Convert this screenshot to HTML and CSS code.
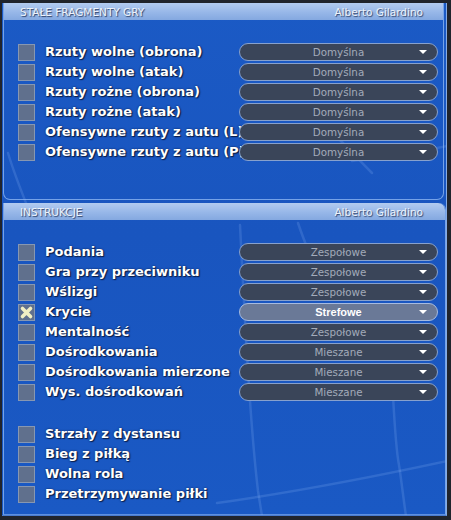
FILE: index.html
```html
<!DOCTYPE html>
<html lang="pl">
<head>
<meta charset="utf-8">
<title>Stałe fragmenty gry</title>
<link rel="stylesheet" href="styles.css">
</head>
<body>
<div class="frame">
  <div class="screen">
    <svg class="net" width="445" height="513" viewBox="0 0 445 513" aria-hidden="true">
      <g fill="none" stroke="#9cc4ff" stroke-opacity="0.18" stroke-width="2.5" stroke-linecap="round">
        <path d="M238 222 C 243 320, 248 420, 256 488 L 260 513"/>
        <path d="M215 500 C 300 488, 380 472, 445 458"/>
        <path d="M391 392 C 393 430, 395 452, 397 462 C 400 482, 402 500, 404 513"/>
        <path d="M333 132 C 348 147, 358 158, 370 170"/>
        <path d="M350 158 C 380 154, 420 148, 445 143"/>
        <path d="M6 150 C 12 170, 18 185, 26 205"/>
        <path d="M296 220 C 300 232, 304 242, 308 252"/>
      </g>
    </svg>

    <section class="panel panel-top">
      <div class="bar"><span>STAŁE FRAGMENTY GRY</span><span>Alberto Gilardino</span></div>
      <div class="body">
        <div class="group">
          <div class="row"><span class="cb"></span><span class="label">Rzuty wolne (obrona)</span><div class="dd"><span>Domyślna</span><i class="arrow"></i></div></div>
          <div class="row"><span class="cb"></span><span class="label">Rzuty wolne (atak)</span><div class="dd"><span>Domyślna</span><i class="arrow"></i></div></div>
          <div class="row"><span class="cb"></span><span class="label">Rzuty rożne (obrona)</span><div class="dd"><span>Domyślna</span><i class="arrow"></i></div></div>
          <div class="row"><span class="cb"></span><span class="label">Rzuty rożne (atak)</span><div class="dd"><span>Domyślna</span><i class="arrow"></i></div></div>
          <div class="row"><span class="cb"></span><span class="label">Ofensywne rzuty z autu (L)</span><div class="dd"><span>Domyślna</span><i class="arrow"></i></div></div>
          <div class="row"><span class="cb"></span><span class="label">Ofensywne rzuty z autu (P)</span><div class="dd"><span>Domyślna</span><i class="arrow"></i></div></div>
        </div>
      </div>
    </section>

    <section class="panel panel-bottom">
      <div class="bar"><span>INSTRUKCJE</span><span>Alberto Gilardino</span></div>
      <div class="body">
        <div class="group">
          <div class="row"><span class="cb"></span><span class="label">Podania</span><div class="dd"><span>Zespołowe</span><i class="arrow"></i></div></div>
          <div class="row"><span class="cb"></span><span class="label">Gra przy przeciwniku</span><div class="dd"><span>Zespołowe</span><i class="arrow"></i></div></div>
          <div class="row"><span class="cb"></span><span class="label">Wślizgi</span><div class="dd"><span>Zespołowe</span><i class="arrow"></i></div></div>
          <div class="row"><span class="cb checked"><svg width="15" height="15" viewBox="0 0 15 15"><path d="M3.5 3.5 L11.5 11.5 M11.5 3.5 L3.5 11.5" stroke="#f1efc4" stroke-width="3.6" stroke-linecap="round"/></svg></span><span class="label">Krycie</span><div class="dd active"><span>Strefowe</span><i class="arrow"></i></div></div>
          <div class="row"><span class="cb"></span><span class="label">Mentalność</span><div class="dd"><span>Zespołowe</span><i class="arrow"></i></div></div>
          <div class="row"><span class="cb"></span><span class="label">Dośrodkowania</span><div class="dd"><span>Mieszane</span><i class="arrow"></i></div></div>
          <div class="row"><span class="cb"></span><span class="label">Dośrodkowania mierzone</span><div class="dd"><span>Mieszane</span><i class="arrow"></i></div></div>
          <div class="row"><span class="cb"></span><span class="label">Wys. dośrodkowań</span><div class="dd"><span>Mieszane</span><i class="arrow"></i></div></div>
        </div>
        <div class="group">
          <div class="row"><span class="cb"></span><span class="label">Strzały z dystansu</span></div>
          <div class="row"><span class="cb"></span><span class="label">Bieg z piłką</span></div>
          <div class="row"><span class="cb"></span><span class="label">Wolna rola</span></div>
          <div class="row"><span class="cb"></span><span class="label">Przetrzymywanie piłki</span></div>
        </div>
      </div>
    </section>
  </div>
</div>
</body>
</html>
```

FILE: styles.css
```css
html, body {
  margin: 0;
  padding: 0;
  background: #1d2129;
}

.frame {
  width: 451px;
  height: 520px;
  box-sizing: border-box;
  padding: 3px 4px 4px 2px;
  background: #20242c;
}

.screen {
  position: relative;
  height: 100%;
  box-sizing: border-box;
  display: flex;
  flex-direction: column;
  gap: 3px;
  overflow: hidden;
  background: linear-gradient(180deg, #1b5ac5 0%, #1955bf 45%, #1a59c4 100%);
  border-right: 1px solid #86ace6;
  border-bottom: 1px solid #4a7cd0;
}

.net {
  position: absolute;
  left: 0;
  top: 0;
  pointer-events: none;
}

.panel {
  position: relative;
  margin-left: 1px;
  box-sizing: border-box;
  border: 1px solid rgba(140, 182, 242, 0.8);
  border-top: 0;
}

.panel-top {
  width: 441px;
  height: 197px;
  flex: none;
  border-radius: 0 0 7px 7px;
}

.panel-bottom {
  width: 443px;
  flex: 1;
  border-radius: 0 7px 0 0;
  border-bottom-color: rgba(140, 182, 242, 0.6);
}

.bar {
  height: 17px;
  display: flex;
  justify-content: space-between;
  align-items: center;
  padding: 0 20px 0 16px;
  background: linear-gradient(180deg, #b2cbf0 0%, #97b7e8 55%, #84a8e0 100%);
  font-family: "DejaVu Sans", Verdana, sans-serif;
  font-size: 10.5px;
  color: #eef3fa;
  text-shadow: 1px 1px 1px #2d4168;
  white-space: nowrap;
}

.panel-bottom .bar {
  padding-right: 22px;
  border-radius: 0 7px 0 0;
}

.body {
  padding: 22px 0 0 14px;
  display: flex;
  flex-direction: column;
  gap: 22px;
}

.group {
  display: flex;
  flex-direction: column;
}

.row {
  display: flex;
  align-items: center;
  height: 20px;
}

.cb {
  flex: none;
  width: 17px;
  height: 17px;
  box-sizing: border-box;
  background: #60708d;
  border: 1px solid #8797b1;
  display: flex;
  align-items: center;
  justify-content: center;
}

.label {
  flex: none;
  width: 194px;
  margin-left: 10px;
  white-space: nowrap;
  font-family: "DejaVu Sans", Verdana, sans-serif;
  font-weight: bold;
  font-size: 13px;
  line-height: 16px;
  color: #ffffff;
  text-shadow: 1px 1px 1px #0c1d46, 0 0 2px #0c1d46;
}

.dd {
  position: relative;
  flex: none;
  width: 199px;
  height: 18px;
  box-sizing: border-box;
  border: 1px solid #87a1cd;
  border-radius: 9px;
  background: #3a4559;
  display: flex;
  align-items: center;
  justify-content: center;
  font-family: "DejaVu Sans", Verdana, sans-serif;
  font-size: 10.3px;
  color: #a3abb9;
}

.dd.active {
  background: #6a7997;
  border-color: #a6bbe0;
  color: #ffffff;
  font-family: "Liberation Sans", Arial, sans-serif;
  font-weight: bold;
  font-size: 11px;
}

.arrow {
  position: absolute;
  right: 10px;
  top: 6px;
  width: 0;
  height: 0;
  border-left: 4px solid transparent;
  border-right: 4px solid transparent;
  border-top: 4px solid #ffffff;
}
```
